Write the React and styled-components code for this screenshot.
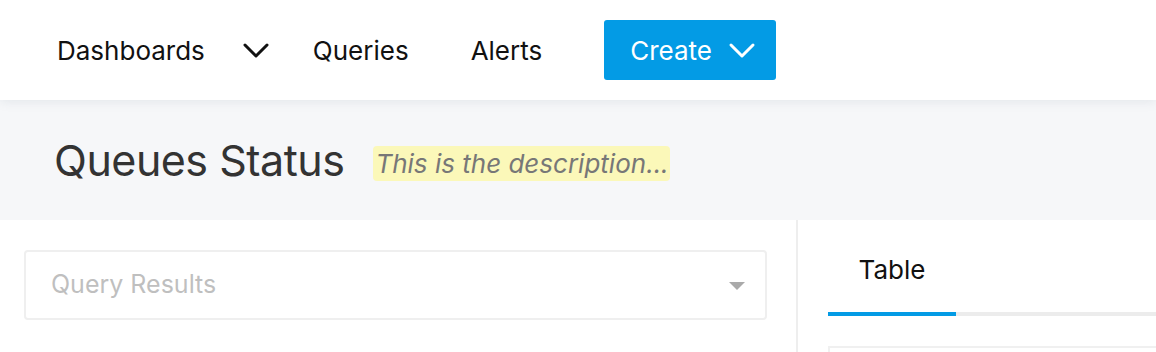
import React from 'react';
import styled, { createGlobalStyle } from 'styled-components';

const GlobalStyle = createGlobalStyle`
   html, body {
      margin: 0;
      padding: 0;
      background: #fff;
      font-family: Inter, "Noto Sans", sans-serif;
      overflow: hidden;
   }
`;

const Page = styled.div`
   width: 1156px;
   height: 352px;
   overflow: hidden;
   display: flex;
   flex-direction: column;
`;

const NavBar = styled.nav`
   position: relative;
   z-index: 2;
   height: 100px;
   flex: none;
   background: #fff;
   display: flex;
   align-items: center;
   padding-left: 57px;
   box-shadow: 0 2px 10px rgba(100, 120, 140, 0.12);
`;

const NavItem = styled.a`
   font-size: 26px;
   color: #111;
   margin-right: ${p => p.gap ?? 62}px;
   display: flex;
   align-items: center;
`;

const Chevron = ({ color = '#111' }) =>
   <svg width="28" height="28" viewBox="0 0 28 28" fill="none">
      <path d="M3 9 L14 20 L25 9" stroke={color} strokeWidth="3" strokeLinecap="round" strokeLinejoin="round" />
   </svg>;

const ChevronWrap = styled.span`
   display: flex;
   margin-left: 37px;
   margin-right: 43px;
`;

const CreateButton = styled.button`
   height: 60px;
   width: 172px;
   border: none;
   border-radius: 3px;
   background: #039be5;
   color: #fff;
   font-family: inherit;
   font-size: 26px;
   display: flex;
   align-items: center;
   gap: 16px;
   padding: 0 0 0 26px;
`;

const Header = styled.header`
   height: 120px;
   flex: none;
   background: #f6f7f9;
   display: flex;
   align-items: center;
   padding-left: 54px;
   box-sizing: border-box;
`;

const Title = styled.h1`
   margin: 0 29px 0 0;
   font-size: 43px;
   font-weight: 400;
   color: #333;
   letter-spacing: -0.5px;
`;

const Description = styled.span`
   background: #fbf8b9;
   border-radius: 4px;
   padding: 2px 1px 2px 2px;
   font-size: 26px;
   font-style: italic;
   color: #777;
   margin-top: 6px;
`;

const Body = styled.div`
   flex: 1;
   display: grid;
   grid-template-columns: 798px 1fr;
`;

const LeftPanel = styled.section`
   border-right: 2px solid #eeeeee;
   padding: 30px 29px 0 24px;
`;

const Select = styled.div`
   height: 70px;
   box-sizing: border-box;
   border: 2px solid #efefef;
   border-radius: 4px;
   display: flex;
   align-items: center;
   justify-content: space-between;
   padding: 0 20px 0 25px;
`;

const Placeholder = styled.span`
   font-size: 25px;
   color: #bfbfbf;
   margin-top: -2px;
`;

const Caret = styled.span`
   width: 0;
   height: 0;
   border-left: 8px solid transparent;
   border-right: 8px solid transparent;
   border-top: 8px solid #aaa;
   margin-top: 2px;
`;

const RightPanel = styled.section`
   padding: 30px 0 0 30px;
`;

const Tabs = styled.div`
   display: flex;
   border-bottom: 4px solid #ececec;
`;

const Tab = styled.div`
   width: 128px;
   height: 66px;
   box-sizing: border-box;
   padding-top: 4px;
   display: flex;
   justify-content: center;
   font-size: 26px;
   color: #111;
   border-bottom: 4px solid ${p => (p.active ? '#039be5' : 'transparent')};
   margin-bottom: -4px;
`;

const TableBox = styled.div`
   margin-top: 30px;
   height: 40px;
   border-top: 2px solid #f0f0f0;
   border-left: 2px solid #f0f0f0;
`;

const App = () =>
   <Page>
      <GlobalStyle />
      <NavBar>
         <NavItem gap={0}>Dashboards</NavItem>
         <ChevronWrap><Chevron /></ChevronWrap>
         <NavItem>Queries</NavItem>
         <NavItem>Alerts</NavItem>
         <CreateButton>
            Create
            <Chevron color="#fff" />
         </CreateButton>
      </NavBar>
      <Header>
         <Title>Queues Status</Title>
         <Description>This is the description...</Description>
      </Header>
      <Body>
         <LeftPanel>
            <Select>
               <Placeholder>Query Results</Placeholder>
               <Caret />
            </Select>
         </LeftPanel>
         <RightPanel>
            <Tabs>
               <Tab active>Table</Tab>
            </Tabs>
            <TableBox />
         </RightPanel>
      </Body>
   </Page>;

export default App;
